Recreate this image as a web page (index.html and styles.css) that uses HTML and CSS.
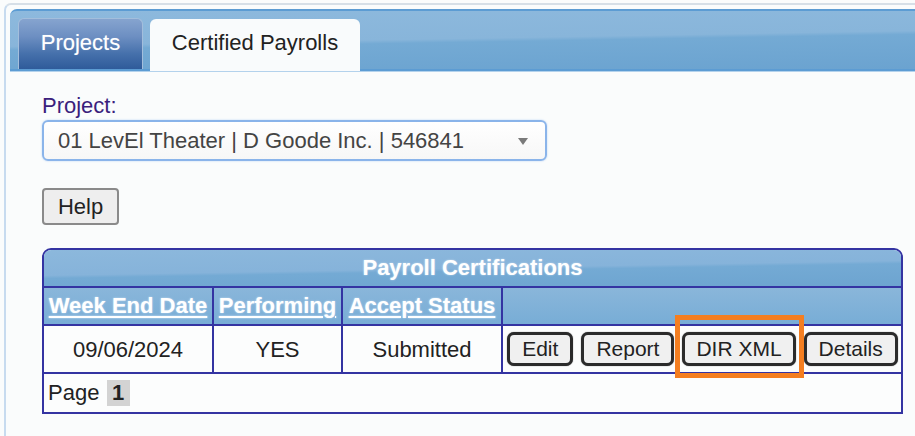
FILE: index.html
```html
<!DOCTYPE html>
<html lang="en">
<head>
<meta charset="utf-8">
<title>Certified Payrolls</title>
<link rel="stylesheet" href="styles.css">
</head>
<body>
<div class="frame">
  <div class="tabbar">
    <div class="tab tab-inactive">Projects</div>
    <div class="tab tab-active">Certified Payrolls</div>
  </div>
  <div class="content">
    <div class="label">Project:</div>
    <div class="select-wrap">
      <select class="select">
        <option>01 LevEl Theater | D Goode Inc. | 546841</option>
      </select>
      <span class="select-arrow"></span>
    </div>
    <button class="help-btn" type="button">Help</button>
    <div class="grid">
      <div class="grid-title">Payroll Certifications</div>
      <table class="grid-table">
        <tr class="head-row">
          <th class="c1"><a href="#">Week End Date</a></th>
          <th class="c2"><a href="#">Performing</a></th>
          <th class="c3"><a href="#">Accept Status</a></th>
          <th class="c4"></th>
        </tr>
        <tr class="data-row">
          <td>09/06/2024</td>
          <td>YES</td>
          <td>Submitted</td>
          <td class="actions">
            <div class="btns">
              <button class="btn" type="button">Edit</button>
              <button class="btn" type="button">Report</button>
              <button class="btn btn-highlight" type="button">DIR XML</button>
              <button class="btn" type="button">Details</button>
            </div>
          </td>
        </tr>
        <tr class="foot-row">
          <td colspan="4"><span class="page-lbl">Page</span> <span class="page-cur">1</span></td>
        </tr>
      </table>
    </div>
  </div>
</div>
</body>
</html>
```

FILE: styles.css
```css
html, body {
  margin: 0;
  padding: 0;
  height: 100%;
  overflow: hidden;
  background: #fafcfc;
  font-family: "Liberation Sans", Arial, sans-serif;
  font-size: 22px;
  color: #222;
}

.frame {
  margin: 3px 0 0 4px;
  padding: 4px 0 0 4px;
  border-top: 2px solid #d6dfe7;
  border-left: 2px solid #c7dbef;
  border-radius: 7px 0 0 0;
  min-height: 440px;
}

.tabbar {
  box-sizing: border-box;
  height: 62px;
  display: flex;
  align-items: flex-end;
  gap: 7px;
  padding-left: 8px;
  border-top: 2px solid #5c9cd3;
  border-bottom: 2px solid #5c9cd3;
  border-radius: 7px 0 0 0;
  background: linear-gradient(179deg, #8db9dd 0%, #88b5da 48%, #74aad4 53%, #6ba3d0 100%);
  box-shadow: 0 1px 0 #b3d2ec;
}

.tab {
  box-sizing: border-box;
  display: flex;
  align-items: center;
  justify-content: center;
  border-radius: 6px 6px 0 0;
  font-size: 22px;
}

.tab-inactive {
  width: 125px;
  height: 51px;
  padding-bottom: 3px;
  color: #fff;
  border: 1px solid #a3bedc;
  border-bottom: none;
  background: linear-gradient(#86a4cf 0%, #6d8fc2 35%, #4570ab 70%, #2f5b9a 100%);
  text-shadow: 0 0 1px rgba(255,255,255,0.4);
}

.tab-active {
  width: 210px;
  height: 52px;
  margin-bottom: -2px;
  padding-bottom: 5px;
  color: #222;
  background: #f9fbfc;
}

.content {
  padding: 22px 0 0 32px;
}

.label {
  height: 25px;
  line-height: 25px;
  color: #3b1f7d;
  margin-bottom: 2px;
}

.select-wrap {
  position: relative;
  width: 505px;
  height: 41px;
}

.select {
  appearance: none;
  -webkit-appearance: none;
  box-sizing: border-box;
  width: 505px;
  height: 41px;
  margin: 0;
  padding: 0 0 0 14px;
  border: 2px solid #8ab4ea;
  border-radius: 6px;
  background: linear-gradient(#ffffff, #f7f7f7);
  box-shadow: 0 0 2px #b5d0f3;
  font-family: "Liberation Sans", Arial, sans-serif;
  font-size: 22px;
  color: #444;
  outline: none;
}

.select-arrow {
  position: absolute;
  right: 19px;
  top: 18px;
  width: 0;
  height: 0;
  border-left: 5px solid transparent;
  border-right: 5px solid transparent;
  border-top: 7px solid #7a7a7a;
  pointer-events: none;
}

.help-btn {
  display: block;
  box-sizing: border-box;
  width: 77px;
  height: 37px;
  margin: 27px 0 0 0;
  padding: 0;
  border: 2px solid #8a8a8a;
  border-radius: 4px;
  background: #eeeeee;
  font-family: "Liberation Sans", Arial, sans-serif;
  font-size: 22px;
  color: #222;
}

.grid {
  margin-top: 23px;
  width: 861px;
  box-sizing: border-box;
  border: 2px solid #3434a2;
  border-radius: 9px 9px 0 0;
  overflow: hidden;
  background: #fcfdfd;
}

.grid-title {
  height: 36px;
  line-height: 36px;
  text-align: center;
  color: #fff;
  font-weight: bold;
  border-bottom: 2px solid #3434a2;
  background: linear-gradient(179deg, #8cb8dc 0%, #86b3da 50%, #74aad4 56%, #6da4d0 100%);
  text-shadow: 0 0 2px rgba(230,240,250,0.7);
}

.grid-table {
  width: 857px;
  table-layout: fixed;
  border-collapse: separate;
  border-spacing: 0;
}

.grid-table th,
.grid-table td {
  box-sizing: border-box;
  padding: 0;
  text-align: center;
  vertical-align: middle;
  border-right: 2px solid #3434a2;
  border-bottom: 2px solid #3434a2;
}

.grid-table th:last-child,
.grid-table td:last-child {
  border-right: none;
}

.grid-table .foot-row td {
  border-bottom: none;
}

.c1 { width: 170px; }
.c2 { width: 129px; }
.c3 { width: 160px; }
.c4 { width: 398px; }

.head-row th {
  height: 38px;
  line-height: 36px;
  background: linear-gradient(#8ab6da, #78add6);
  font-weight: bold;
  white-space: nowrap;
}

.head-row a {
  color: #fff;
  text-decoration: underline;
  text-decoration-thickness: 2px;
  text-underline-offset: 3px;
  text-shadow: 0 0 2px rgba(220,235,250,0.8);
}

.data-row td {
  height: 48px;
  line-height: 25px;
  background: #fcfdfd;
  color: #222;
}

.btns {
  display: flex;
  justify-content: center;
  gap: 8px;
  padding-left: 1px;
}

.btn {
  box-sizing: border-box;
  height: 34px;
  margin: 0;
  padding: 0 12px;
  border: 3px solid #2b2b2b;
  border-radius: 7px;
  background: #f0f0f0;
  box-shadow: 0 0 1px #555;
  font-family: "Liberation Sans", Arial, sans-serif;
  font-size: 21px;
  color: #222;
}

.btn-highlight {
  position: relative;
  padding: 0 11px;
}

.btn-highlight::after {
  content: "";
  position: absolute;
  left: -10px;
  right: -11px;
  top: -20px;
  bottom: -15px;
  border: 5px solid #f47e20;
  pointer-events: none;
}

.foot-row td {
  height: 38px;
  text-align: left;
  padding-left: 4px;
  background: #fcfdfd;
}

.page-cur {
  display: inline-block;
  width: 23px;
  height: 26px;
  line-height: 26px;
  text-align: center;
  font-weight: bold;
  background: #d3d3d3;
  margin-left: 1px;
}
```
